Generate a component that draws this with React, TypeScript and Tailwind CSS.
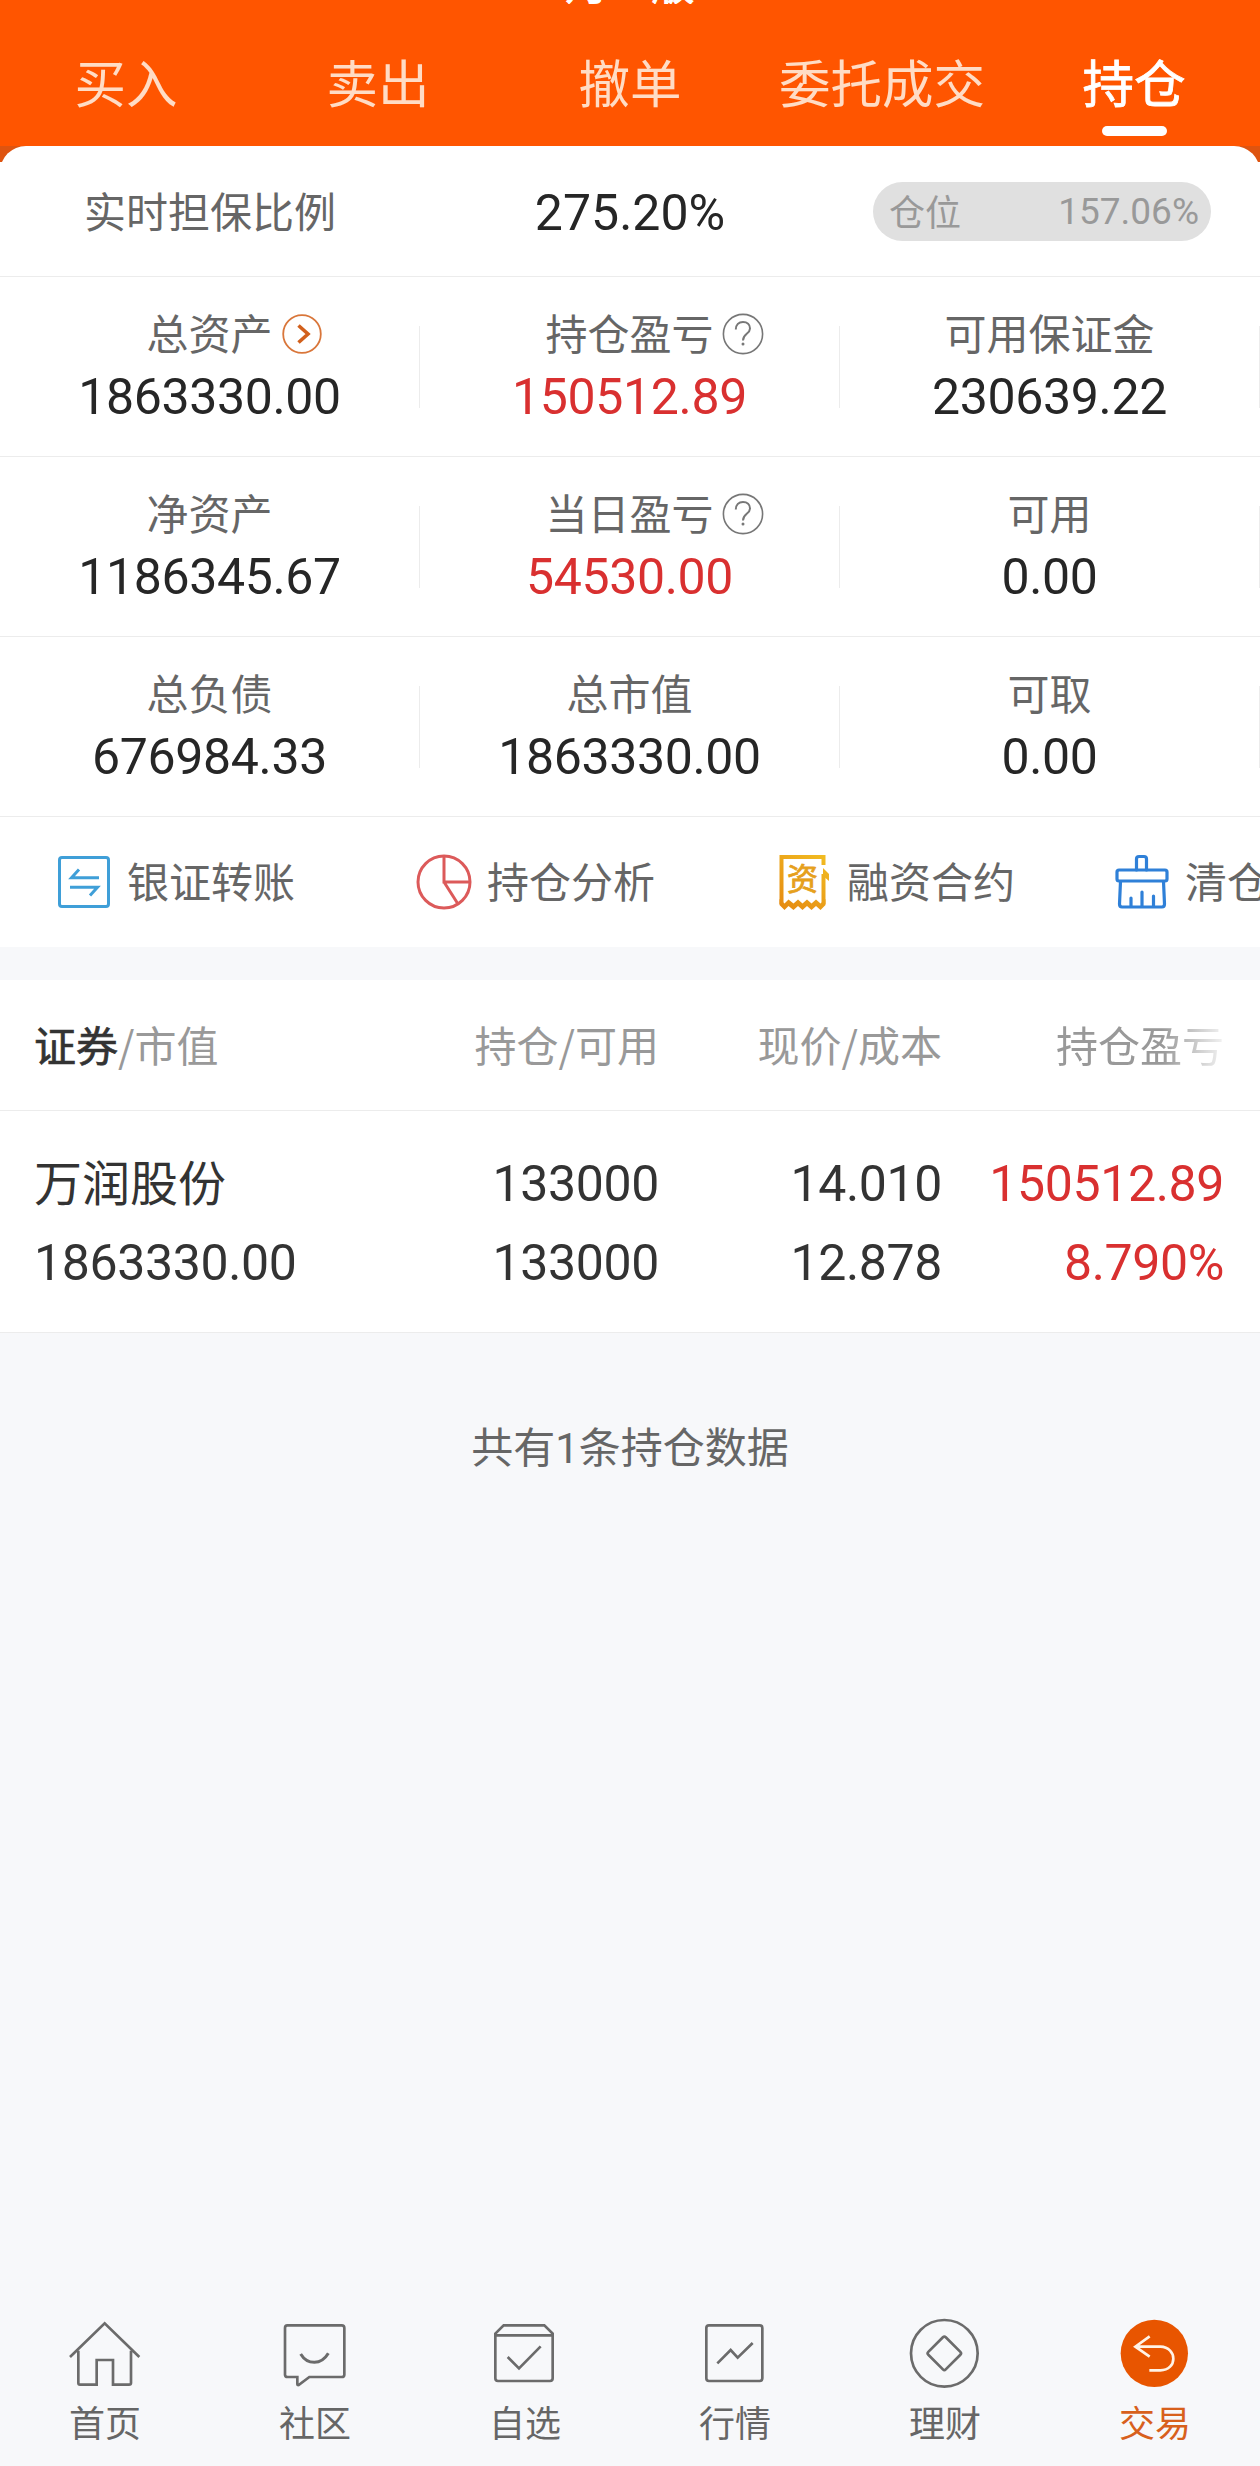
import type { ReactNode } from "react";

const CJK = "font-['Noto_Sans_CJK_SC',sans-serif]";
const NUM = "font-['Roboto','Noto_Sans_CJK_SC',sans-serif]";

const tabs = [
  { label: "买入" },
  { label: "卖出" },
  { label: "撤单" },
  { label: "委托成交" },
  { label: "持仓", active: true },
];

function ArrowBadge() {
  return (
    <svg viewBox="0 0 42 42" className="size-[42px]" fill="none">
      <circle cx="21" cy="21" r="18.8" stroke="#d9763a" strokeWidth="1.8" />
      <path d="M17.5 12.5 27 21l-9.5 8.5" stroke="#d2601c" strokeWidth="3.6" />
    </svg>
  );
}

function HelpBadge() {
  return (
    <svg viewBox="0 0 42 42" className="size-[42px]" fill="none" stroke="#777">
      <circle cx="21" cy="21" r="19.6" strokeWidth="1.6" />
      <path d="M13.8 16.5c0-4.6 3-7.6 7.2-7.6s7 2.8 7 6.5c0 5.6-7 5.4-7 12" strokeWidth="2" />
      <circle cx="21" cy="31" r="1.5" fill="#777" stroke="none" />
    </svg>
  );
}

type Cell = { label: string; value: string; red?: boolean; badge?: ReactNode };

const stats: Cell[][] = [
  [
    { label: "总资产", value: "1863330.00", badge: <ArrowBadge /> },
    { label: "持仓盈亏", value: "150512.89", red: true, badge: <HelpBadge /> },
    { label: "可用保证金", value: "230639.22" },
  ],
  [
    { label: "净资产", value: "1186345.67" },
    { label: "当日盈亏", value: "54530.00", red: true, badge: <HelpBadge /> },
    { label: "可用", value: "0.00" },
  ],
  [
    { label: "总负债", value: "676984.33" },
    { label: "总市值", value: "1863330.00" },
    { label: "可取", value: "0.00" },
  ],
];

function StatCell({ label, value, red, badge }: Cell) {
  return (
    <div className="relative flex h-[179px] w-[420px] flex-col items-center pt-[25px] pr-px">
      <div className={`${CJK} relative text-[42px] leading-[60px] text-[#666]`}>
        {label}
        {badge && <span className="absolute top-[11px] left-full ml-[8px]">{badge}</span>}
      </div>
      <div className={`${NUM} mt-[2px] text-[50px] leading-[66px] tracking-[-0.35px] ${red ? "text-[#d93030]" : "text-[#262626]"}`}>
        {value}
      </div>
      <i className="absolute top-[49px] right-0 h-[82px] w-px bg-[#ececec]" />
    </div>
  );
}

function TransferIcon() {
  return (
    <svg viewBox="0 0 56 56" className="size-[56px]" fill="none" stroke="#3f9fd8" strokeWidth="3">
      <rect x="3.5" y="3.5" width="49" height="49" rx="2.5" />
      <path d="M43 23.8H15.5L23 15.5M14 33.2h27.5L34 41.5" />
    </svg>
  );
}

function PieIcon() {
  return (
    <svg viewBox="0 0 56 56" className="size-[56px]" fill="none" stroke="#dc5a5a" strokeWidth="3">
      <circle cx="28" cy="28" r="26" />
      <path d="M28 2v26h26M28 28l14 22" />
    </svg>
  );
}

function ContractIcon() {
  return (
    <svg viewBox="0 0 56 56" className="size-[56px]" fill="none">
      <defs>
        <linearGradient id="gold" gradientUnits="userSpaceOnUse" x1="50" y1="0" x2="6" y2="56">
          <stop offset="0" stopColor="#f2bd22" />
          <stop offset="1" stopColor="#e58a12" />
        </linearGradient>
      </defs>
      <path d="M47.500 11V3H5.500V50M47.500 20V50" stroke="url(#gold)" strokeWidth="4" />
      <path d="M47 14v8l6 5v-7Z" fill="url(#gold)" />
      <path
        d="M3.500 45 8.500 49.500 12.500 45.500 17.500 49.500 22 45.500 26.500 49.500 31 45.500 35.500 49.500 40 45.500 44.500 49.500 49.500 45V51L44.500 56 40 52 35.500 56 31 52 26.500 56 22 52 17.500 56 12.500 52 8.500 56 3.500 51Z"
        fill="url(#gold)"
      />
      <text x="26.500" y="35.500" textAnchor="middle" fontSize="31" fill="#e6a01c" stroke="#e6a01c" strokeWidth="0.8" fontFamily="Noto Sans CJK SC, sans-serif">
        资
      </text>
    </svg>
  );
}

function BroomIcon() {
  return (
    <svg viewBox="0 0 56 56" className="size-[56px]" fill="none" stroke="#2f80d8" strokeWidth="3.2" strokeLinejoin="round" strokeLinecap="round">
      <path d="M22.5 16V5q0-2.5 2.500-2.500h5q2.500 0 2.500 2.500v11" />
      <rect x="3" y="16" width="50" height="11" rx="2" />
      <path d="M6.500 27.500 5.500 50q0 3 2.500 3h40q2.500 0 2.500-3L49.500 27.500M17 52v-8M28 52V38M39.500 52V42" />
    </svg>
  );
}

const actions = [
  { label: "银证转账", icon: <TransferIcon />, width: "w-[360px]" },
  { label: "持仓分析", icon: <PieIcon />, width: "w-[360px]" },
  { label: "融资合约", icon: <ContractIcon />, width: "w-[338px]" },
  { label: "清仓", icon: <BroomIcon />, width: "w-[160px]" },
];

/* Bottom navigation drawings share one 630×216 grid: a 210px column at triple resolution. */
const nav = [
  {
    label: "首页",
    icon: (
      <path d="M210 117 314 16l104 101M235 98v97q0 5 5 5h50v-74h49v74h48q6 0 6-5V98" />
    ),
  },
  {
    label: "社区",
    icon: (
      <g transform="translate(-630 0)">
        <path d="M862 22h163q8 0 8 8v140q0 7-8 7h-97l-32 24q-4 1-4-3v-21h-29q-8 0-8-7V30q0-8 7-8Z" />
        <path d="M902 108q15 25 41 25t42-27" strokeWidth="9" />
      </g>
    ),
  },
  {
    label: "自选",
    icon: (
      <>
        <path d="M226 47 251 22h122l25 25v134q0 8-8 8H234q-8 0-8-8ZM228 52h168" />
        <path d="m263 117 34 34 65-66" />
      </>
    ),
  },
  {
    label: "行情",
    icon: (
      <g transform="translate(-630 0)">
        <rect x="859" y="22" width="168" height="167" rx="8" />
        <path d="m892 136 40-40 21 23 45-44" />
      </g>
    ),
  },
  {
    label: "理财",
    icon: (
      <>
        <circle cx="313" cy="106" r="100" />
        <rect x="276" y="69" width="74" height="74" rx="6" transform="rotate(45 313 106)" />
      </>
    ),
  },
  {
    label: "交易",
    active: true,
    icon: (
      <g transform="translate(-630 0)">
        <circle cx="943" cy="106" r="101" fill="#e85500" stroke="none" />
        <path d="M929 55 886 86l43 30M886 86h75c52 2 52 70 0 71h-33" stroke="#fff3e6" strokeWidth="8" />
      </g>
    ),
  },
];

export default function App() {
  return (
    <div className={`${CJK} flex h-[2466px] w-[1260px] flex-col overflow-hidden bg-[#f7f8fa]`}>
      <header className="relative h-[146px] shrink-0 bg-[#ff5500]">
        <div className="absolute inset-x-0 top-0 h-[4px] overflow-hidden">
          <div className="-mt-[49px] flex justify-center text-[43px] leading-[60px] text-white [-webkit-text-stroke:1px_#fff]">
            月一版
          </div>
        </div>
        <nav className="flex h-[146px]">
          {tabs.map((t) => (
            <div key={t.label} className="flex w-[252px] flex-col items-center pt-[45px]">
              <span
                className={`text-[51.5px] leading-[72px] whitespace-nowrap ${
                  t.active ? "text-white [-webkit-text-stroke:0.8px_#fff]" : "text-[#ffdcc5]"
                }`}
              >
                {t.label}
              </span>
              {t.active && <i className="mt-[9px] h-[10px] w-[65px] rounded-[5px] bg-white" />}
            </div>
          ))}
        </nav>
      </header>

      <div className="shrink-0 bg-[linear-gradient(#de5410_0_16px,#fff_16px)]">
        <section className="rounded-t-[26px] bg-white">
          <div className="flex h-[131px] items-center border-b border-[#ececec]">
            <div className="w-[420px] pb-[3px] pl-[84px] text-[42px] leading-[60px] text-[#666]">实时担保比例</div>
            <div className={`${NUM} w-[420px] pt-[3px] text-center text-[50px] leading-[60px] text-[#262626]`}>275.20%</div>
            <div className="ml-[33px] flex h-[59px] w-[338px] items-center justify-between rounded-full bg-[#e0e0e0] pr-[12px] pl-[16px] text-[36px] text-[#999]">
              <span className="pb-[3px] leading-[50px]">仓位</span>
              <span className={`${NUM} pt-px text-[37px] leading-[50px]`}>157.06%</span>
            </div>
          </div>
          {stats.map((row, i) => (
            <div key={i} className="flex h-[180px] border-b border-[#ececec]">
              {row.map((c) => (
                <StatCell key={c.label} {...c} />
              ))}
            </div>
          ))}
          <div className="flex h-[130px] items-center overflow-hidden pl-[56px]">
            {actions.map((a) => (
              <div key={a.label} className={`${a.width} flex shrink-0 items-center gap-[15px]`}>
                {a.icon}
                <span className="pb-[4px] text-[42px] leading-[60px] whitespace-nowrap text-[#666]">{a.label}</span>
              </div>
            ))}
          </div>
        </section>
      </div>

      <section className="mt-[33px] shrink-0 bg-white">
        <div className="flex h-[131px] items-center border-b border-[#ececec] pb-[3px] text-[42px] leading-[60px] text-[#999]">
          <div className="w-[400px] pl-[34px]">
            <span className="text-[#333] [-webkit-text-stroke:0.7px_#333]">证券</span>/市值
          </div>
          <div className="w-[259px] text-right">持仓/可用</div>
          <div className="w-[283px] text-right">现价/成本</div>
          <div className="w-[282px] [mask-image:linear-gradient(to_right,#000_220px,transparent_290px)] text-right">
            持仓盈亏
          </div>
        </div>
        <div className={`${NUM} flex h-[222px] border-b border-[#ececec] pt-[34px] text-[50px] leading-[79px] tracking-[-0.35px] text-[#333]`}>
          <div className="w-[400px] pl-[34px]">
            <div className={`${CJK} -mt-[4px] mb-[4px] text-[48px] tracking-normal`}>万润股份</div>
            <div>1863330.00</div>
          </div>
          <div className="w-[259px] text-right">
            <div>133000</div>
            <div>133000</div>
          </div>
          <div className="w-[283px] text-right">
            <div>14.010</div>
            <div>12.878</div>
          </div>
          <div className="w-[282px] text-right text-[#d93030]">
            <div>150512.89</div>
            <div>8.790%</div>
          </div>
        </div>
      </section>

      <p className="mt-[82px] text-center text-[42px] leading-[60px] text-[#666]">
        共有<span className={NUM}>1</span>条持仓数据
      </p>

      <footer className="mt-auto flex h-[148px]">
        {nav.map((n) => (
          <div key={n.label} className="flex w-[210px] flex-col items-center">
            <svg viewBox="0 0 630 216" className="h-[72px] w-[210px]" fill="none" stroke="#6b6b6b" strokeWidth="8">
              {n.icon}
            </svg>
            <span className={`mt-[6px] text-[36px] leading-[50px] ${n.active ? "text-[#d8601c]" : "text-[#666]"}`}>
              {n.label}
            </span>
          </div>
        ))}
      </footer>
    </div>
  );
}
